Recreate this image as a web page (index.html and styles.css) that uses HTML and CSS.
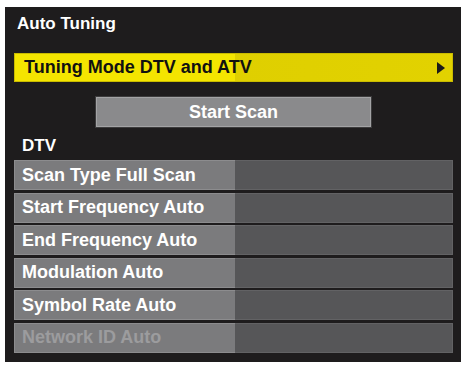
FILE: index.html
```html
<!DOCTYPE html>
<html>
<head>
<meta charset="utf-8">
<link rel="stylesheet" href="styles.css">
</head>
<body>
<div class="panel">
  <div class="title">Auto Tuning</div>
  <div class="mode">
    <span class="mode-label">Tuning Mode DTV and ATV</span>
    <span class="mode-arrow"></span>
  </div>
  <div class="scan-wrap"><div class="scan-btn">Start Scan</div></div>
  <div class="section">DTV</div>
  <div class="rows">
    <div class="row"><span class="row-label">Scan Type Full Scan</span><span class="row-value"></span></div>
    <div class="row"><span class="row-label">Start Frequency Auto</span><span class="row-value"></span></div>
    <div class="row"><span class="row-label">End Frequency Auto</span><span class="row-value"></span></div>
    <div class="row"><span class="row-label">Modulation Auto</span><span class="row-value"></span></div>
    <div class="row"><span class="row-label">Symbol Rate Auto</span><span class="row-value"></span></div>
    <div class="row disabled"><span class="row-label">Network ID Auto</span><span class="row-value"></span></div>
  </div>
</div>
</body>
</html>
```

FILE: styles.css
```css
html, body {
  margin: 0;
  padding: 0;
  background: #ffffff;
}
body {
  width: 464px;
  height: 365px;
  overflow: hidden;
  font-family: "Liberation Sans", Arial, sans-serif;
  font-weight: bold;
}
.panel {
  margin: 7px 0 0 5px;
  width: 456px;
  height: 355px;
  box-sizing: border-box;
  background: #1e1c1d;
  padding: 0 8px 0 9px;
  display: flex;
  flex-direction: column;
}
.title {
  color: #ffffff;
  font-size: 17px;
  line-height: 20px;
  margin-top: 7px;
  padding-left: 3px;
}
.mode {
  margin-top: 19px;
  height: 29px;
  display: flex;
  align-items: center;
  justify-content: space-between;
  background: linear-gradient(to right, #f4e500 0, #f4e500 221px, #dfcf00 221px, #e2d200 100%);
  box-shadow: inset 0 0 0 1px #c9bb00;
  padding: 0 8px 0 10px;
  color: #111;
  font-size: 18px;
}
.mode-arrow {
  width: 0;
  height: 0;
  border-top: 6px solid transparent;
  border-bottom: 6px solid transparent;
  border-left: 8px solid #1a1a1a;
}
.scan-wrap {
  display: flex;
  justify-content: center;
  margin-top: 15px;
}
.scan-btn {
  width: 275px;
  height: 30px;
  box-sizing: border-box;
  background: #8a8a8c;
  border: 1px solid #a3a3a5;
  box-shadow: 0 0 0 1px #3c3b3c;
  color: #ffffff;
  font-size: 18px;
  display: flex;
  align-items: center;
  justify-content: center;
}
.section {
  color: #ffffff;
  font-size: 17px;
  line-height: 20px;
  margin-top: 9px;
  padding-left: 8px;
}
.rows {
  margin-top: 4px;
  display: flex;
  flex-direction: column;
  gap: 2.6px;
}
.row {
  height: 30px;
  display: flex;
}
.row-label {
  width: 221px;
  box-sizing: border-box;
  background: #7b7b7d;
  border: 1px solid #8c8c8e;
  border-right: none;
  color: #ffffff;
  font-size: 18px;
  padding-left: 7px;
  display: flex;
  align-items: center;
}
.row-value {
  flex: 1;
  box-sizing: border-box;
  background: #565658;
  border: 1px solid #626264;
  border-left: none;
}
.row.disabled .row-label {
  color: #9c9c9e;
}
```
